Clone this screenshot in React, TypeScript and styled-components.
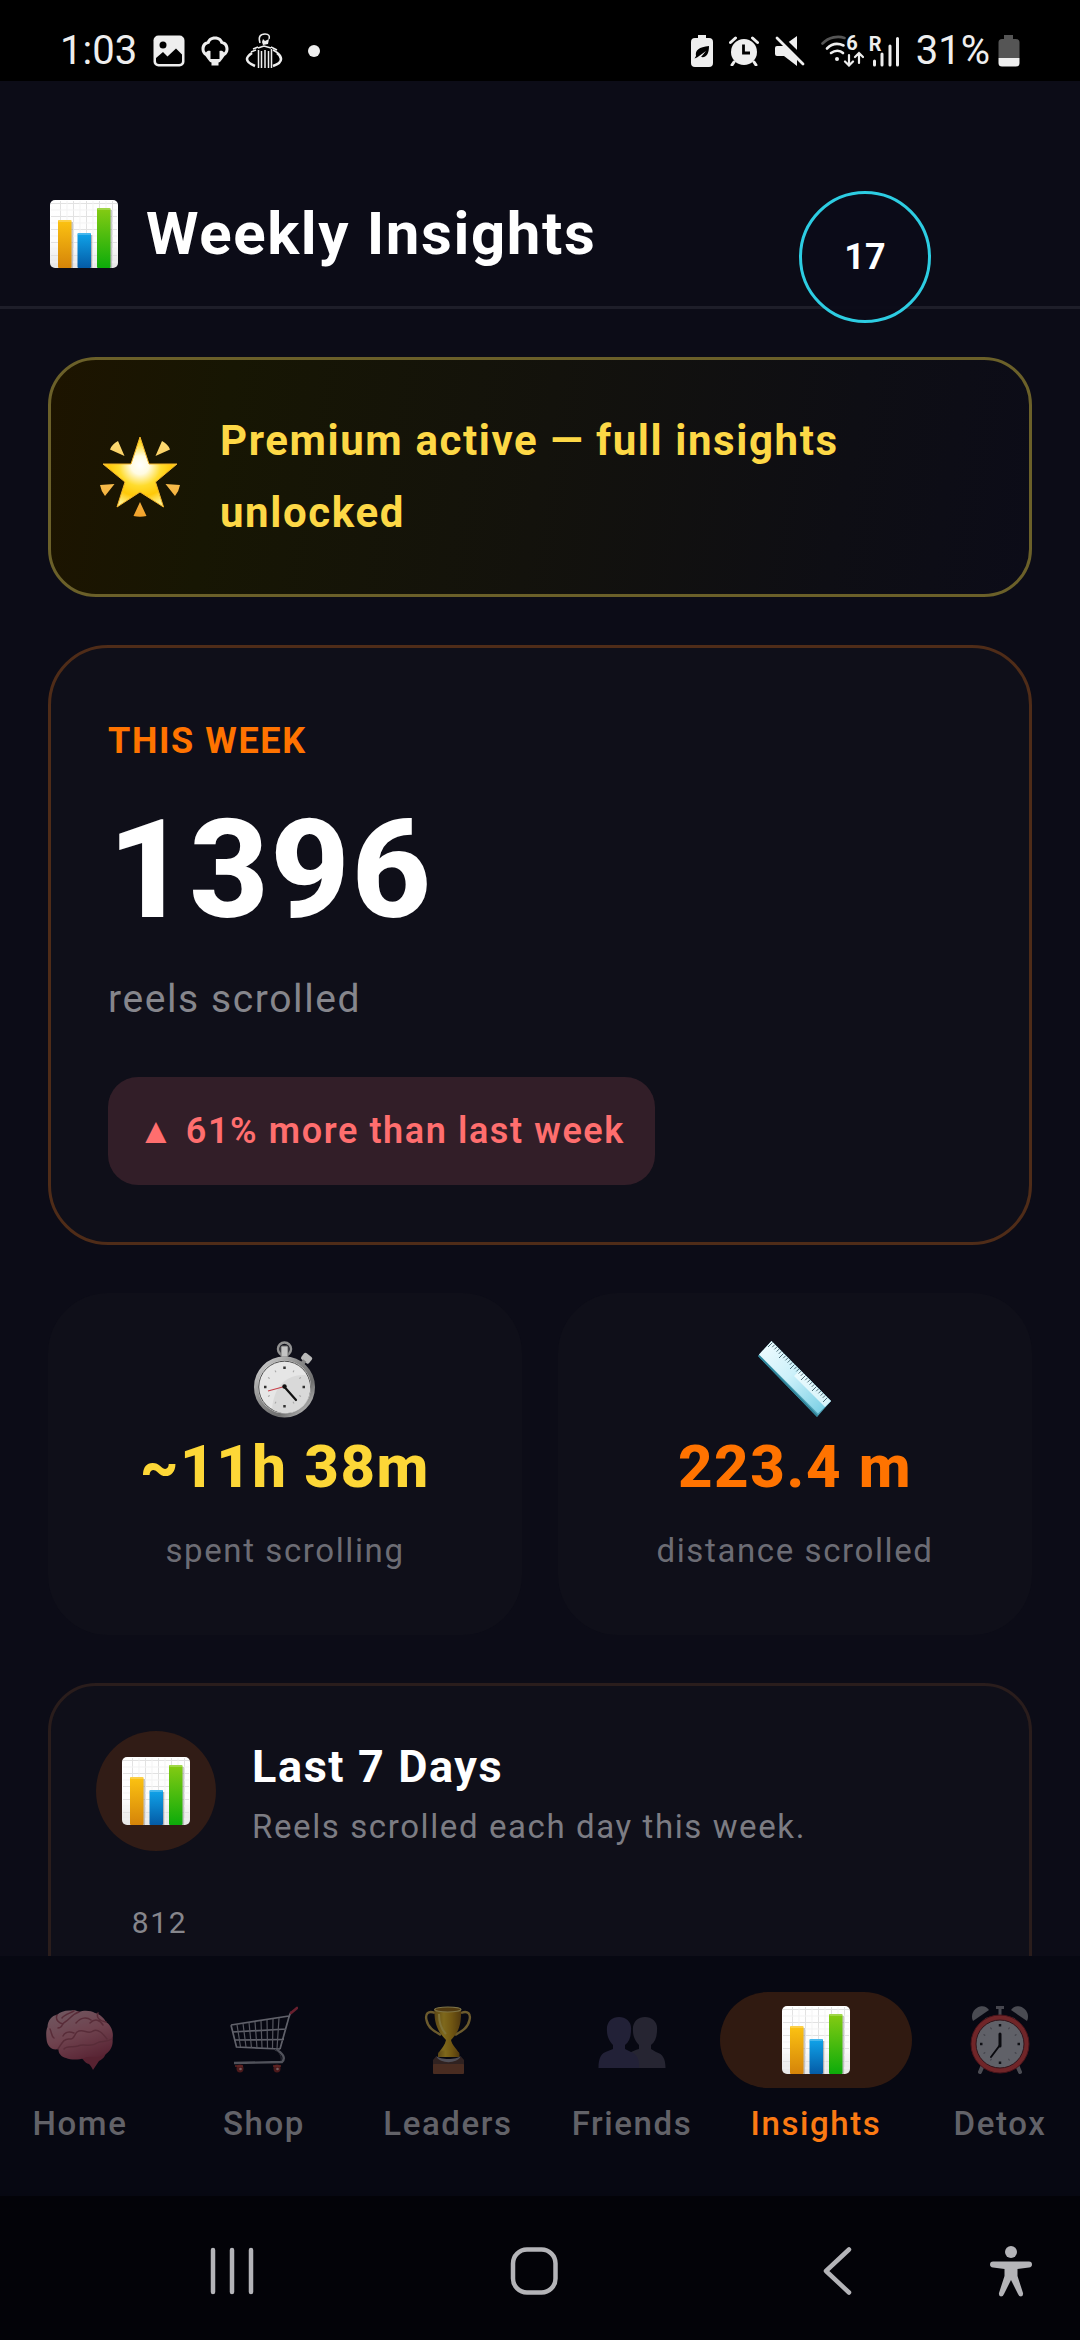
import React, { useId } from 'react';
import styled, { createGlobalStyle } from 'styled-components';

const GlobalStyle = createGlobalStyle`
  * { box-sizing: border-box; }
  html, body { margin: 0; background: #000; }
  body {
    font-family: Roboto, "Noto Sans", sans-serif;
    color: #fff;
    line-height: 72px;
    letter-spacing: 0.1rem;
  }
  h1, h2, p { margin: 0; }
  svg { display: block; flex: none; }
  button { font: inherit; letter-spacing: inherit; color: inherit; background: none; border: 0; padding: 0; margin: 0; }
`;

const Screen = styled.div`
  height: 100vh;
  display: flex;
  flex-direction: column;
  overflow: hidden;
  background: #0c0c17;
`;

const StatusBar = styled.div`
  flex: none;
  height: 81px;
  padding: 21px 60px 0;
  display: flex;
  align-items: center;
  justify-content: space-between;
  background: #000;
  color: #eee;
  font-size: 40px;
  line-height: 60px;
  letter-spacing: 0;
`;

const StatusGroup = styled.div<{ $gap: number }>`
  display: flex;
  align-items: center;
  gap: ${(p) => p.$gap}px;
`;

const Header = styled.header`
  flex: none;
  display: flex;
  align-items: center;
  gap: 26px;
  padding: 117px 48px 36px;
  border-bottom: 3px solid #1e1e29;
`;

const Title = styled.h1`
  font-size: 60px;
  line-height: 72px;
  font-weight: 700;
`;

const Bubble = styled.button`
  position: absolute;
  top: 191px;
  right: 149px;
  width: 132px;
  height: 132px;
  border-radius: 50%;
  border: 3px solid #2dcde2;
  background: rgba(12, 12, 24, 0.94);
  font-size: 36px;
  font-weight: 700;
  letter-spacing: 0;
`;

const Content = styled.main`
  flex: 1;
  min-height: 0;
  overflow: hidden;
  padding: 48px;
  display: flex;
  flex-direction: column;
  gap: 48px;
  > * { flex: none; }
`;

const PremiumCard = styled.section`
  display: flex;
  align-items: center;
  gap: 36px;
  padding: 45px;
  border: 3px solid #6b6029;
  border-radius: 48px;
  background: linear-gradient(100deg, #1d1400 0%, #171603 18%, #13120c 50%, #0e0e14 80%, #0c0c18 100%);
  font-size: 42px;
  font-weight: 700;
  color: #fdd846;
`;

const IconBox = styled.div<{ $w: number; $h: number }>`
  flex: none;
  width: ${(p) => p.$w}px;
  height: ${(p) => p.$h}px;
  display: grid;
  place-items: center;
`;

const WeekCard = styled.section`
  padding: 57px;
  border: 3px solid #4f2c18;
  border-radius: 60px;
  background: #0f0f19;
  display: flex;
  flex-direction: column;
  align-items: flex-start;
`;

const Eyebrow = styled.h2`
  font-size: 36px;
  line-height: 72px;
  font-weight: 700;
  color: #ff7300;
`;

const BigNumber = styled.p`
  margin: 12px 0;
  font-size: 138px;
  line-height: 162px;
  font-weight: 800;
`;

const Unit = styled.p`
  font-size: 39px;
  color: #86868c;
`;

const Trend = styled.p`
  margin-top: 42px;
  padding: 18px 30px;
  border-radius: 30px;
  background: #321e28;
  color: #ff6e6e;
  font-size: 36px;
  font-weight: 600;
`;

const StatRow = styled.div`
  display: grid;
  grid-template-columns: 1fr 1fr;
  gap: 36px;
`;

const StatCard = styled.section`
  display: flex;
  flex-direction: column;
  align-items: center;
  gap: 12px;
  padding: 48px;
  border-radius: 60px;
  background: #0f0f19;
`;

const StatValue = styled.p<{ $color: string }>`
  font-size: 60px;
  font-weight: 800;
  color: ${(p) => p.$color};
`;

const StatLabel = styled.p`
  font-size: 33px;
  color: #6c6c74;
`;

const DaysCard = styled.section`
  padding: 45px;
  border: 3px solid #2a1d1c;
  border-radius: 48px;
  background: #0f0f19;
`;

const DaysHead = styled.div`
  display: flex;
  align-items: center;
  gap: 36px;
`;

const RoundBadge = styled.div`
  width: 120px;
  height: 120px;
  border-radius: 50%;
  background: #311c16;
  display: grid;
  place-items: center;
`;

const DaysTitle = styled.h2`
  font-size: 45px;
  line-height: 72px;
  font-weight: 700;
`;

const DaysNote = styled.p`
  font-size: 33px;
  line-height: 48px;
  color: #7c7c83;
`;

const Chart = styled.div`
  margin-top: 48px;
  display: grid;
  grid-template-columns: repeat(7, 1fr);
  align-items: end;
`;

const Day = styled.div`
  display: flex;
  flex-direction: column;
  align-items: center;
  gap: 12px;
  font-size: 30px;
  line-height: 48px;
  color: #86868c;
`;

const Bar = styled.div`
  width: 72px;
  border-radius: 18px;
  background: #ff7300;
`;

const TabBar = styled.nav`
  flex: none;
  display: grid;
  grid-template-columns: repeat(6, 1fr);
  gap: 24px;
  padding: 36px 0 48px;
  background: #070812;
`;

const Tab = styled.button<{ $active?: boolean }>`
  display: flex;
  flex-direction: column;
  align-items: center;
  gap: 12px;
  min-width: 0;
  font-size: 33px;
  line-height: 48px;
  font-weight: 500;
  color: ${(p) => (p.$active ? '#fb7a13' : '#626268')};
`;

const TabIcon = styled.span<{ $active?: boolean }>`
  flex: none;
  width: 192px;
  height: 96px;
  border-radius: 48px;
  display: grid;
  place-items: center;
  background: ${(p) => (p.$active ? '#301a11' : 'transparent')};
  > svg { opacity: ${(p) => (p.$active ? 1 : 0.5)}; }
`;

const SystemBar = styled.div`
  flex: none;
  height: 144px;
  padding: 6px 48px 0 192px;
  display: flex;
  align-items: center;
  justify-content: space-between;
  background: #030308;
`;

const SystemKey = styled.button`
  width: 80px;
  height: 96px;
  display: grid;
  place-items: center;
`;

const SystemKeys = styled.div`
  flex: 1;
  display: flex;
  justify-content: space-between;
  margin-right: 114px;
`;

/* ---------- emoji drawings ---------- */

function ChartEmoji() {
  const id = useId();
  return (
    <svg width="68" height="68" viewBox="0 0 68 68" aria-hidden="true">
      <defs>
        <linearGradient id={id + 'p'} x1="0" y1="0" x2="0" y2="1">
          <stop offset="0" stopColor="#fff" /><stop offset=".6" stopColor="#fdfdfd" /><stop offset="1" stopColor="#e6e6e6" />
        </linearGradient>
        <linearGradient id={id + 'o'} x1="0" y1="0" x2="0" y2="1"><stop offset="0" stopColor="#fcc312" /><stop offset="1" stopColor="#d58409" /></linearGradient>
        <linearGradient id={id + 'b'} x1="0" y1="0" x2="0" y2="1"><stop offset="0" stopColor="#10a4ea" /><stop offset="1" stopColor="#045ba6" /></linearGradient>
        <linearGradient id={id + 'g'} x1="0" y1="0" x2="0" y2="1"><stop offset="0" stopColor="#86cb13" /><stop offset="1" stopColor="#0cab0a" /></linearGradient>
      </defs>
      <rect width="68" height="68" rx="5" fill={`url(#${id}p)`} />
      <path d="M10.500 1V67M23.500 1V67M36.500 1V67M49.500 1V67M62.500 1V67M1 3.500H67M1 16.500H67M1 29.500H67M1 42.500H67M1 55.500H67" stroke="#e2e2e2" strokeWidth="1" />
      <path d="M17 1V67M30 1V67M43 1V67M56 1V67M1 10H67M1 23H67M1 36H67M1 49H67M1 62H67" stroke="#f3f3f3" strokeWidth="1" />
      <path d="M22 22v46M41.500 35v33M61 10v58" stroke="#8a8a8a" strokeWidth="1.500" opacity=".6" />
      <rect x="8" y="20" width="13.500" height="48" rx="1" fill={`url(#${id}o)`} />
      <rect x="27.500" y="33" width="13.500" height="35" rx="1" fill={`url(#${id}b)`} />
      <rect x="47" y="8" width="13.500" height="60" rx="1" fill={`url(#${id}g)`} />
      <path d="M8.500 21h12.500M28 34h12.500M47.500 9h12.500" stroke="#fff" strokeOpacity=".3" strokeWidth="1.500" />
    </svg>
  );
}

function StarEmoji() {
  return (
    <svg width="80" height="80" viewBox="0 0 80 80" aria-hidden="true">
      <defs>
        <radialGradient id="starFill" gradientUnits="userSpaceOnUse" cx="40" cy="28" r="42">
          <stop offset="0" stopColor="#fff" /><stop offset=".22" stopColor="#fffbe2" /><stop offset=".5" stopColor="#ffdc2e" /><stop offset=".75" stopColor="#ffc808" /><stop offset="1" stopColor="#fff08a" />
        </radialGradient>
        <linearGradient id="rayFill" x1="0" y1="0" x2="0" y2="1"><stop offset="0" stopColor="#fddc74" /><stop offset="1" stopColor="#f2a32c" /></linearGradient>
      </defs>
      <path d="M40 0L49 27H77L55.500 45L63.500 70L40 55L17 70L25 45L3 27H31Z" fill="url(#starFill)" stroke="#f3b42a" strokeWidth="1" strokeLinejoin="round" />
      <path d="M18 4L24.500 19L10 12.500Q12 7 18 4ZM62 4Q68 7 70 12.500L55.500 19ZM0 48L14.500 47L5 59Q1 54 0 48ZM80 48Q79 54 75 59L65.500 47ZM40 65L46.500 79Q40 80.500 33.500 79Z" fill="url(#rayFill)" />
    </svg>
  );
}

function StopwatchEmoji() {
  const marks = Array.from({ length: 12 }, (_, i) => i);
  return (
    <svg width="62" height="78" viewBox="0 0 62 78" aria-hidden="true">
      <defs>
        <linearGradient id="steel" x1="0" y1="0" x2="1" y2="1">
          <stop offset="0" stopColor="#d8d8d8" /><stop offset=".4" stopColor="#8d8d8d" /><stop offset=".7" stopColor="#6f6f6f" /><stop offset="1" stopColor="#d0d0d0" />
        </linearGradient>
      </defs>
      <circle cx="30.500" cy="8" r="6.500" fill="none" stroke="#929292" strokeWidth="2.500" />
      <rect x="27" y="5" width="7" height="11" rx="1" fill="#c3c3c3" stroke="#6f6f6f" />
      <g transform="rotate(38 52 18)"><rect x="47" y="13" width="10" height="8" rx="2" fill="#b9b9b9" /><rect x="50" y="20" width="4" height="5" fill="#858585" /></g>
      <circle cx="30.500" cy="46" r="28.500" fill="#ededed" stroke="url(#steel)" strokeWidth="4" />
      <circle cx="30.500" cy="46" r="25.800" fill="#e6e6e6" stroke="#4e4e4e" strokeWidth="1" />
      <path d="M18 68C20 45 32 33 52 34A24.500 24.500 0 0 1 18 68Z" fill="#d9d9d9" />
      {marks.map((m) => (
        <path key={m} d={m % 3 === 0 ? 'M30.500 25.500v2.500' : 'M30.500 27v2'} stroke={m % 3 === 0 ? '#333' : '#a5a5a5'} strokeWidth={m % 3 === 0 ? 2.5 : 1} transform={`rotate(${m * 30} 30.500 46)`} />
      ))}
      <path d="M30.500 45.500L14 50" stroke="#c8404a" strokeWidth="1.200" />
      <path d="M30.500 46L42 59" stroke="#111" strokeWidth="2.200" strokeLinecap="round" />
      <circle cx="30.500" cy="45.500" r="2.200" fill="#111" />
    </svg>
  );
}

function RulerEmoji() {
  const ticks = Array.from({ length: 26 }, (_, i) => i);
  return (
    <svg width="74" height="78" viewBox="0 0 74 78" aria-hidden="true">
      <defs>
        <linearGradient id="rulerFill" x1="0" y1="0" x2="1" y2="1">
          <stop offset="0" stopColor="#f2fcff" /><stop offset=".45" stopColor="#cdf1fa" /><stop offset="1" stopColor="#6fcbe2" />
        </linearGradient>
      </defs>
      <path d="M0 15L13.500 0L73 60L59 76Z" fill="#4fa3b8" />
      <path d="M1 13.500L13.500 0L73 60L60 72.500Z" fill="url(#rulerFill)" />
      <path d="M36 35L67 66L73 60L42 29Z" fill="#f4fdff" opacity=".75" />
      <path d="M1 15L59.500 75" stroke="#2d8297" strokeWidth="1.500" />
      {ticks.map((t) => {
        const x = 14.5 + t * 2.2;
        const y = 1.5 + t * 2.2;
        const l = t % 5 === 0 ? 4.5 : 2.5;
        return <path key={t} d={`M${x} ${y}l${-l} ${l}`} stroke="#3a5c66" strokeWidth=".9" />;
      })}
    </svg>
  );
}

function BrainEmoji() {
  return (
    <svg width="68" height="68" viewBox="0 0 68 68" aria-hidden="true">
      <defs>
        <linearGradient id="brainFill" x1=".2" y1="0" x2=".7" y2="1">
          <stop offset="0" stopColor="#d9a5ad" /><stop offset=".5" stopColor="#d67d8b" /><stop offset="1" stopColor="#a93f55" />
        </linearGradient>
      </defs>
      <path d="M33 50C38 53 38 57 43 58C45 60 46 62 47 64C49 61 51 58 53 55C57 53 60 50 60 45L48 40Z" fill="#a63c50" />
      <path d="M0.500 33C0 28 0 24 1.500 21C1.500 15 6 9 11 9C14 5.500 20 4 25 4.500C28 4 31 4.500 33 6C38 4 45 4.500 49 7C54 8 58 12 60 16C65 19 68 26 66.500 33C67.500 40 64 45 60 48C54 53 43 49 38 52C33 54 25 54 20 52C15 51 12 47 12.500 43C6 45 1 40 0.500 33Z" fill="url(#brainFill)" />
      <path d="M12 43C16 37 18 32 24 33C28 34 28 29 31 26C37 22 42 29 47 25C52 22 57 28 61 33M17 30C19 26 23 25 28 27M11 9C9 14 13 17 17 18M33 6C26 8 24 13 19 16C15 18 17 22 12 22M44 17C49 12 54 14 57 19M30 17C35 11 41 11 45 14M18 43C21 39 27 42 32 40C38 37 45 42 51 37C55 34 60 37 66 33M4 23C6 27 5 30 8 32M52 7C50 11 53 15 60 16M28 5C22 8 18 9 16 12" fill="none" stroke="#a9505f" strokeWidth="1.500" strokeLinecap="round" />
    </svg>
  );
}

function CartEmoji() {
  return (
    <svg width="68" height="68" viewBox="0 0 68 68" fill="none" aria-hidden="true">
      <path d="M61.500 6C59 8 59 12 57 18L50 43M1 19L59 10M1 19L6.500 41L50 43M2.500 26L56.500 23M5 34L54 33.500" stroke="#b9bac2" strokeWidth="1.700" />
      <path d="M7 18.500L10.500 41M13 17.500L16 41M19 16.500L21.500 42M25 16L27 42M31 15L32 42M37 14L37.500 42M43 13L42.500 42M49 12L47 43" stroke="#a5a6ae" strokeWidth="1.200" />
      <path d="M45 43C53 47 56 52 52 56L4 57" stroke="#9a9ba3" strokeWidth="2.400" />
      <path d="M45 43C50 47 52 51 51 55" stroke="#50515a" strokeWidth="1" />
      <path d="M61 7L67 2" stroke="#c8374a" strokeWidth="2.600" strokeLinecap="round" />
      <ellipse cx="10" cy="62.500" rx="3.500" ry="4" fill="#8e2b25" /><ellipse cx="47" cy="62.500" rx="3.500" ry="4" fill="#8e2b25" />
      <circle cx="10.500" cy="63" r="1.300" fill="#e7b0a8" /><circle cx="47.500" cy="63" r="1.300" fill="#e7b0a8" />
      <path d="M5 60h8M43 60h8" stroke="#c04134" strokeWidth="1.500" />
    </svg>
  );
}

function TrophyEmoji() {
  return (
    <svg width="68" height="68" viewBox="0 0 68 68" aria-hidden="true">
      <defs>
        <linearGradient id="gold" x1="0" y1="0" x2="1" y2="0">
          <stop offset="0" stopColor="#b08419" /><stop offset=".35" stopColor="#f5c826" /><stop offset=".65" stopColor="#d9a312" /><stop offset="1" stopColor="#9a6b0e" />
        </linearGradient>
      </defs>
      <path d="M21 7C14 4 11 8 12.500 14C14 22 20 25 27 29M47 7C54 4 57 8 55.500 14C54 22 48 25 41 29" fill="none" stroke="#ceab48" strokeWidth="2.400" />
      <path d="M20.500 3.500C20 18 24 26 32 34C31 39 28 42 24.500 47H45C42 42 38 39 37 34C45 26 47.500 18 47 3.500Z" fill="url(#gold)" />
      <ellipse cx="33.800" cy="3.500" rx="13.200" ry="2.500" fill="#9a6d10" stroke="#f2dc7a" strokeWidth="1.200" />
      <path d="M25 8C25 18 28 24 32 28" fill="none" stroke="#f7dc5f" strokeWidth="2" />
      <path d="M24 48C24 43 45 43 45.500 48V51H24Z" fill="url(#gold)" />
      <path d="M22.500 50C26 54 43 54 46.500 50V54C42 58 27 58 22.500 54Z" fill="#98949a" />
      <path d="M19 54L22 50.500C27 58 42 58 47 50.500L50 54V59H19Z" fill="#5a3d31" />
      <rect x="19" y="58" width="31" height="10" rx="1" fill="#8b5130" />
    </svg>
  );
}

function FriendsEmoji() {
  return (
    <svg width="68" height="68" viewBox="0 0 68 68" aria-hidden="true">
      <path d="M47 11C40 11 34 16 35 25C35 31 38 36 41 39V43C34 45 28 48 28 55V62H67.500C67.500 53 65 48 58 46L53 43V39C57 36 59 31 59 24C60 16 54 11 47 11Z" fill="#454352" />
      <path d="M21 11C14 11 8 16 9 25C9 31 12 36 15 39V43L10 45C3 47 0.500 52 0.500 62H41C42 54 39 48 33 46L27 43V39C31 36 33 31 33 24C34 16 28 11 21 11Z" fill="#3e3a5c" />
    </svg>
  );
}

function ClockEmoji() {
  const marks = Array.from({ length: 12 }, (_, i) => i);
  return (
    <svg width="68" height="68" viewBox="0 0 68 68" aria-hidden="true">
      <path d="M17 59L14 66M51 59L54 66" stroke="#8f8f93" strokeWidth="4" strokeLinecap="round" />
      <path d="M30 1.500h8M34 1V9M20 12l3 5M48 12l-3 5" stroke="#85858a" strokeWidth="3" />
      <path d="M7 15C4 9 8 2 14 .500C18-.500 21 1 23 4Z" fill="#8d8d92" />
      <path d="M61 15C64 9 60 2 54 .500C50-.500 47 1 45 4Z" fill="#8d8d92" />
      <circle cx="34" cy="38" r="26.500" fill="#b9b9be" stroke="#d8433f" strokeWidth="5" />
      <circle cx="34" cy="38" r="29" fill="none" stroke="#8c1f22" strokeWidth="1" />
      <circle cx="34" cy="38" r="24" fill="none" stroke="#5d2022" strokeWidth="1" />
      {marks.map((m) => (
        <path key={m} d={m % 3 === 0 ? 'M34 18v2.500' : 'M34 19v2'} stroke={m % 3 === 0 ? '#1a1a1a' : '#77777c'} strokeWidth={m % 3 === 0 ? 2.5 : 1} transform={`rotate(${m * 30} 34 38)`} />
      ))}
      <path d="M34 40V28" stroke="#0d0d0d" strokeWidth="3" strokeLinecap="round" />
      <path d="M34 39L25 51" stroke="#0d0d0d" strokeWidth="2" strokeLinecap="round" />
    </svg>
  );
}

/* ---------- status bar glyphs ---------- */

const PictureGlyph = () => (
  <svg width="32" height="32" viewBox="0 0 32 32" aria-hidden="true">
    <rect x=".5" y=".5" width="31" height="31" rx="5" fill="#eee" />
    <circle cx="10" cy="10" r="3.500" fill="#000" />
    <path d="M3 23L10 17L14.500 21.500L23 13.500L29 19.500V26Q29 29 26 29H6Q3 29 3 26Z" fill="#000" />
  </svg>
);

const BulbGlyph = () => (
  <svg width="28" height="30" viewBox="0 0 28 30" aria-hidden="true">
    <path d="M14 .500C18.500 .500 21 3 22 5.500C25.500 6 27.500 9 27.500 13C27.500 16 26 18.500 23.500 20L21 23.500Q19.500 26 17.500 26.500V29.500H10.500V26.500Q8.500 26 7 23.500L4.500 20C2 18.500 .500 16 .500 13C.500 9 2.500 6 6 5.500C7 3 9.500 .500 14 .500Z" fill="#eee" />
    <path d="M14 3.500C17 3.500 19 5 19.500 7.500C22.500 8 24.500 10 24.500 13C24.500 14.500 24 15.500 23 16.500C22 14.500 20 14.500 18.500 15V23H9.500V15C8 14.500 6 14.500 5 16.500C4 15.500 3.500 14.500 3.500 13C3.500 10 5.500 8 8.500 7.500C9 5 11 3.500 14 3.500Z" fill="#000" />
  </svg>
);

const RefereeGlyph = () => (
  <svg width="38" height="36" viewBox="0 0 38 36" fill="none" stroke="#eee" aria-hidden="true">
    <path d="M15 10C13 4 15 1 20 1C24 1 25 3 24 6" strokeWidth="1.500" />
    <path d="M18 6L20 8L24 6L23 11L18 12L17 9Z" fill="#eee" stroke="none" />
    <path d="M13 15L19 13L26 15M13.500 17V35M16.500 18V35M20 17V35M23.500 18V35M26.500 16V35" strokeWidth="1.500" />
    <path d="M8 16L13 14M6 19L11 17M26 14L32 17M28 17L33 20" strokeWidth="1.500" />
    <path d="M7 20C4 22 2 24 2 26C2 28 5 31 10 33M32 20C35 22 36 24 36 26C36 28 34 31 28 33" strokeWidth="2.600" />
  </svg>
);

const DotGlyph = () => (
  <svg width="12" height="12" viewBox="0 0 12 12" aria-hidden="true"><circle cx="6" cy="6" r="6" fill="#eee" /></svg>
);

const EcoBatteryGlyph = () => (
  <svg width="22" height="32" viewBox="0 0 22 32" aria-hidden="true">
    <path d="M7 0h8v3h3q4 0 4 4v21q0 4-4 4H4q-4 0-4-4V7q0-4 4-4h3z" fill="#eee" />
    <path d="M5 21C4 15 8 12 18 11C18 18 16 23 10 22L15 16L6 22.500L3.500 23.500Z" fill="#000" />
  </svg>
);

const AlarmGlyph = () => (
  <svg width="30" height="30" viewBox="0 0 30 30" aria-hidden="true">
    <circle cx="15" cy="16" r="13" fill="#eee" />
    <path d="M1.500 6.500L6.500 2M28.500 6.500L23.500 2M5 26L3 29M25 26L27 29" stroke="#eee" strokeWidth="3" strokeLinecap="round" />
    <path d="M14.500 8.500V17H21" fill="none" stroke="#000" strokeWidth="2.800" />
  </svg>
);

const MuteGlyph = () => (
  <svg width="30" height="30" viewBox="0 0 30 30" aria-hidden="true">
    <path d="M2 10H8L22 0V30L9 20H2Q0 20 0 18V12Q0 10 2 10Z" fill="#eee" />
    <path d="M3.500 0L31 27" stroke="#000" strokeWidth="6" />
    <path d="M2 2L28 28" stroke="#eee" strokeWidth="2.800" strokeLinecap="round" />
  </svg>
);

const Signal = styled.span`
  display: grid;
  > * { grid-area: 1 / 1; }
`;

const SignalMark = styled.span<{ $end?: boolean }>`
  align-self: start;
  justify-self: ${(p) => (p.$end ? 'end' : 'start')};
  padding-right: ${(p) => (p.$end ? 6 : 0)}px;
  font-size: 20px;
  line-height: 16px;
  font-weight: 700;
`;

const WifiGlyph = () => (
  <Signal>
    <svg width="43" height="32" viewBox="0 0 43 32" fill="none" strokeLinecap="round" aria-hidden="true">
      <path d="M1.500 8.500C8 2 17 .500 23.500 3" stroke="#555" strokeWidth="2.600" />
      <path d="M6 13.500C11 8.500 17 8 22.500 10.500" stroke="#eee" strokeWidth="2.600" />
      <path d="M10 18C14 15 19 15 22 18" stroke="#eee" strokeWidth="2.600" />
      <circle cx="16" cy="24" r="2" fill="#eee" />
      <path d="M28 20V30M24 26.500L28 30.500L32 26.500M38 28V18M34 22L38 18L42 22" stroke="#eee" strokeWidth="2.200" />
    </svg>
    <SignalMark $end>6</SignalMark>
  </Signal>
);

const SignalGlyph = () => (
  <Signal>
    <svg width="31" height="31" viewBox="0 0 31 31" stroke="#eee" strokeWidth="3" strokeLinecap="round" aria-hidden="true">
      <path d="M5.500 25V29M13 18V29M21 10V29M28.500 2.500V29" />
    </svg>
    <SignalMark>R</SignalMark>
  </Signal>
);

const BatteryGlyph = () => (
  <svg width="22" height="32" viewBox="0 0 22 32" aria-hidden="true">
    <path d="M6 0h9v4h3q3.500 0 3.500 3.500V23H.5V7.500Q.5 4 4 4h2z" fill="#555" />
    <path d="M.5 23h21v5q0 3.500-3.500 3.500H4Q.5 31.500 .5 28z" fill="#eee" />
  </svg>
);

const tabs = [
  { label: 'Home', icon: <BrainEmoji /> },
  { label: 'Shop', icon: <CartEmoji /> },
  { label: 'Leaders', icon: <TrophyEmoji /> },
  { label: 'Friends', icon: <FriendsEmoji /> },
  { label: 'Insights', icon: <ChartEmoji />, active: true },
  { label: 'Detox', icon: <ClockEmoji /> },
];

const barHeights = [300, 60, 90, 40, 50, 80, 30];

export default function App() {
  return (
    <>
      <GlobalStyle />
      <Screen>
        <StatusBar>
          <StatusGroup $gap={16}>
            <span>1:03</span>
            <PictureGlyph />
            <BulbGlyph />
            <RefereeGlyph />
            <IconBox $w={30} $h={32}><DotGlyph /></IconBox>
          </StatusGroup>
          <StatusGroup $gap={8}>
            <StatusGroup $gap={16}>
              <EcoBatteryGlyph />
              <AlarmGlyph />
              <MuteGlyph />
              <StatusGroup $gap={5}>
                <WifiGlyph />
                <SignalGlyph />
              </StatusGroup>
              <span>31%</span>
            </StatusGroup>
            <BatteryGlyph />
          </StatusGroup>
        </StatusBar>

        <Header>
          <IconBox $w={72} $h={72}><ChartEmoji /></IconBox>
          <Title>Weekly Insights</Title>
        </Header>

        <Content>
          <PremiumCard>
            <IconBox $w={88} $h={88}><StarEmoji /></IconBox>
            <p>Premium active — full insights unlocked</p>
          </PremiumCard>

          <WeekCard>
            <Eyebrow>THIS WEEK</Eyebrow>
            <BigNumber>1396</BigNumber>
            <Unit>reels scrolled</Unit>
            <Trend>▲ 61% more than last week</Trend>
          </WeekCard>

          <StatRow>
            <StatCard>
              <StopwatchEmoji />
              <StatValue $color="#fdd737">~11h 38m</StatValue>
              <StatLabel>spent scrolling</StatLabel>
            </StatCard>
            <StatCard>
              <RulerEmoji />
              <StatValue $color="#ff7300">223.4 m</StatValue>
              <StatLabel>distance scrolled</StatLabel>
            </StatCard>
          </StatRow>

          <DaysCard>
            <DaysHead>
              <RoundBadge><ChartEmoji /></RoundBadge>
              <div>
                <DaysTitle>Last 7 Days</DaysTitle>
                <DaysNote>Reels scrolled each day this week.</DaysNote>
              </div>
            </DaysHead>
            <Chart>
              {barHeights.map((h, i) => (
                <Day key={i}>
                  {i === 0 && <span>812</span>}
                  <Bar style={{ height: h }} />
                </Day>
              ))}
            </Chart>
          </DaysCard>
        </Content>

        <TabBar>
          {tabs.map((t) => (
            <Tab key={t.label} type="button" $active={t.active}>
              <TabIcon $active={t.active}>{t.icon}</TabIcon>
              {t.label}
            </Tab>
          ))}
        </TabBar>

        <SystemBar>
          <SystemKeys>
            <SystemKey type="button" aria-label="Recent apps">
              <svg width="48" height="50" viewBox="0 0 48 50" stroke="#b4b4b8" strokeWidth="4.500" strokeLinecap="round">
                <path d="M5 4V46M24 4V46M43 4V46" />
              </svg>
            </SystemKey>
            <SystemKey type="button" aria-label="Home">
              <svg width="48" height="50" viewBox="0 0 48 50" fill="none" stroke="#b4b4b8" strokeWidth="4.500">
                <rect x="3" y="3.500" width="42.500" height="43" rx="14" />
              </svg>
            </SystemKey>
            <SystemKey type="button" aria-label="Back">
              <svg width="48" height="50" viewBox="0 0 48 50" fill="none" stroke="#b4b4b8" strokeWidth="4.500" strokeLinecap="round" strokeLinejoin="round">
                <path d="M37 3.500L14 25L37 46.500" />
              </svg>
            </SystemKey>
          </SystemKeys>
          <svg width="42" height="52" viewBox="0 0 42 52" fill="#b4b4b8" aria-hidden="true">
            <circle cx="21" cy="7" r="6" />
            <path d="M3 16.500H39Q42 16.500 42 19.500Q42 22 39 22.500L27.500 24V31L33 48Q33.500 51.500 31 51.500Q29 51.500 28 49L21 35L14 49Q13 51.500 11 51.500Q8.500 51.500 9 48L14.500 31V24L3 22.500Q0 22 0 19.500Q0 16.500 3 16.500Z" />
          </svg>
        </SystemBar>
        <Bubble type="button">17</Bubble>
      </Screen>
    </>
  );
}
